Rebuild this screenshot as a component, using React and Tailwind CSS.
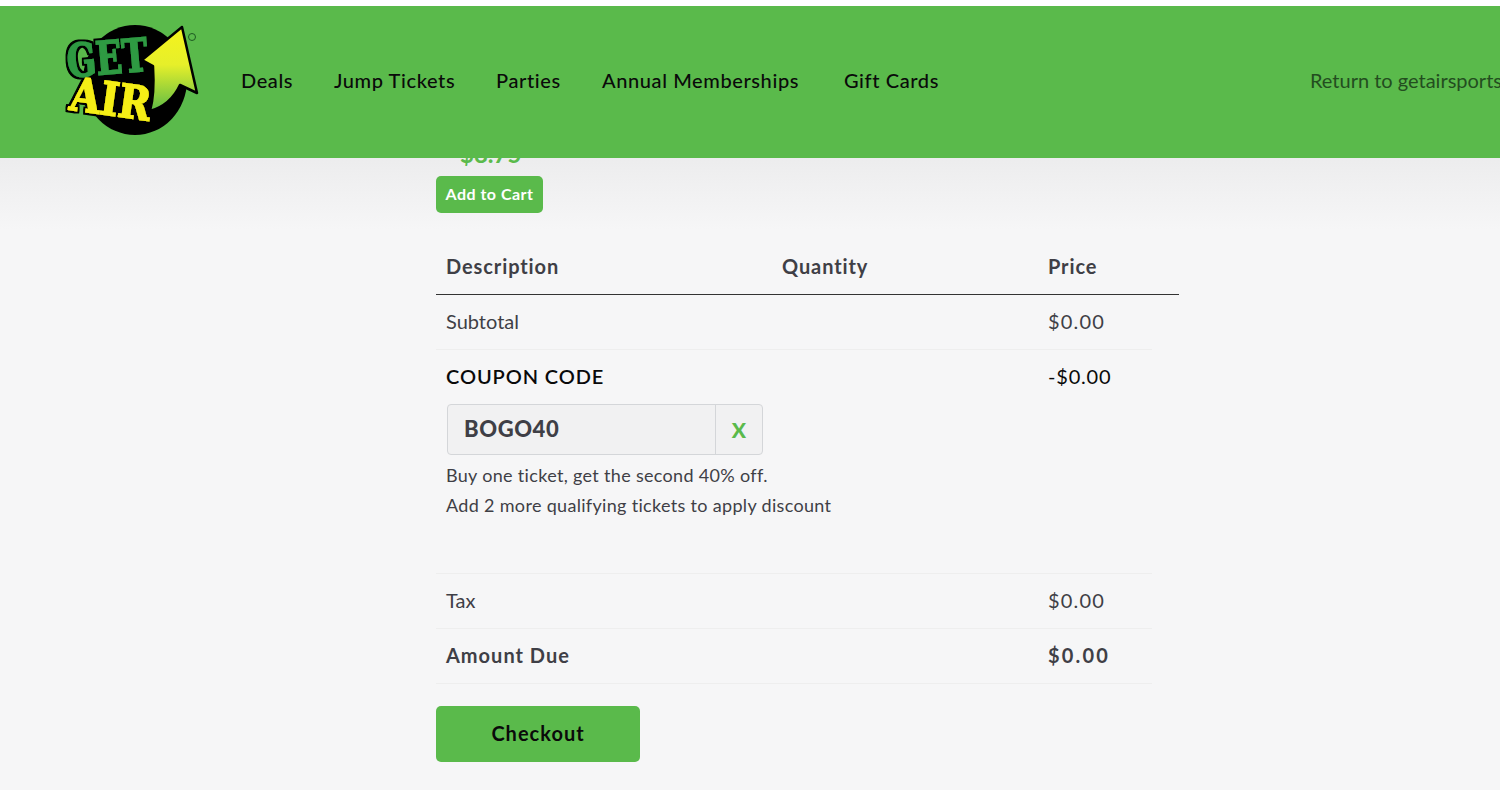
function Logo() {
  return (
    <svg width="140" height="116" viewBox="0 0 140 116" className="shrink-0 overflow-visible">
      <defs>
        <linearGradient id="arrow" x1="0" y1="0" x2="0" y2="1">
          <stop offset="0" stopColor="#f6f31c" />
          <stop offset="0.45" stopColor="#e6ef2a" />
          <stop offset="1" stopColor="#5dbb46" />
        </linearGradient>
        <filter id="outline" x="-20%" y="-20%" width="140%" height="140%">
          <feMorphology in="SourceAlpha" operator="dilate" radius="2" result="fat" />
          <feFlood floodColor="#000" />
          <feComposite in2="fat" operator="in" result="edge" />
          <feMerge>
            <feMergeNode in="edge" />
            <feMergeNode in="SourceGraphic" />
          </feMerge>
        </filter>
      </defs>
      <ellipse cx="73" cy="58" rx="52" ry="55" fill="#000" />
      <path d="M120 5 L80 38 L91 44 C92 60 92 75 88 89 C102 85 112 76 118 63 L135 71 Z" fill="url(#arrow)" stroke="#000" strokeWidth="2.5" strokeLinejoin="round" />
      <g fontFamily="'DejaVu Serif', serif" fontWeight="700" filter="url(#outline)">
        <text x="6" y="52" fontSize="46" fill="#2f9a43" stroke="#2f9a43" strokeWidth="1.4" textLength="81" lengthAdjust="spacingAndGlyphs" transform="rotate(-5 46 52)">GET</text>
        <text x="6" y="93" fontSize="46" fill="#f5ee14" stroke="#f5ee14" strokeWidth="1.4" textLength="81" lengthAdjust="spacingAndGlyphs" transform="rotate(8 46 93)">AIR</text>
      </g>
      <circle cx="130" cy="15" r="3.5" fill="none" stroke="#1d5a22" strokeWidth="1" />
    </svg>
  );
}

function Row({ label, value, bold }) {
  return (
    <div className={`flex h-[55px] w-[716px] items-center border-b border-[#eeeeee] pb-[2px] pl-[10px] text-[20px] text-[#3f3f46] ${bold ? "font-bold" : ""}`}>
      <span className={`flex-1 ${bold ? "tracking-[1px]" : ""}`}>{label}</span>
      <span className={`w-[104px] ${bold ? "tracking-[2.2px]" : "tracking-[1.2px]"}`}>{value}</span>
    </div>
  );
}

export default function App() {
  return (
    <div className="relative h-[790px] w-full overflow-hidden bg-[#f6f6f7] text-[#3f3f46] [font-family:'Lato','Noto_Sans',sans-serif]">
      <div className="h-[6px] bg-white" />
      <header className="relative z-10 flex h-[152px] items-center bg-[#5aba4b] pb-[4px] pl-[62px] whitespace-nowrap">
        <Logo />
        <nav className="ml-[39px] flex text-[20px] font-medium tracking-[0.6px] text-[#0a0a0a]">
          <a className="w-[93px]">Deals</a>
          <a className="w-[162px]">Jump Tickets</a>
          <a className="w-[106px]">Parties</a>
          <a className="w-[242px]">Annual Memberships</a>
          <a>Gift Cards</a>
        </nav>
        <a className="ml-[371px] text-[20px] text-[#234d1f]">Return to getairsports.com</a>
      </header>

      <main className="bg-gradient-to-b from-[#ebebec] to-[#f6f6f7] bg-[length:100%_84px] bg-no-repeat pl-[436px]">
        <div className="-mt-[12px] h-[30px] pl-[24px] text-[24px] font-bold leading-[16px] text-[#5aba4b]">$8.75</div>
        <button className="flex h-[37px] w-[107px] items-center justify-center rounded-[5px] bg-[#5aba4b] pb-[2px] text-[16px] font-bold tracking-[0.5px] text-white">Add to Cart</button>

        <div className="mt-[26px] flex h-[56px] w-[743px] items-center border-b border-[#333333] pb-[2px] pl-[10px] text-[20px] font-bold tracking-[0.9px]">
          <span className="w-[336px]">Description</span>
          <span className="w-[266px]">Quantity</span>
          <span>Price</span>
        </div>

        <Row label="Subtotal" value="$0.00" />

        <div className="flex h-[224px] w-[716px] border-b border-[#eeeeee] pl-[10px] pt-[14px]">
          <div className="flex-1">
            <div className="text-[20px] font-semibold leading-[24px] tracking-[0.9px] text-[#0a0a0a]">COUPON CODE</div>
            <div className="ml-[1px] mt-[16px] flex h-[51px] w-[316px] rounded-[4px] border border-[#d4d6d9] bg-[#f1f1f2]">
              <span className="flex w-[268px] items-center border-r border-[#d4d6d9] pb-[2px] pl-[16px] text-[22px] font-black tracking-[0.6px]">BOGO40</span>
              <span className="flex flex-1 items-center justify-center text-[21px] font-black text-[#5aba4b]">X</span>
            </div>
            <div className="mt-[5px] text-[18px] leading-[30px] tracking-[0.32px]">Buy one ticket, get the second 40% off.</div>
            <div className="text-[18px] leading-[30px] tracking-[0.32px]">Add 2 more qualifying tickets to apply discount</div>
          </div>
          <span className="-ml-[3px] w-[104px] text-[20px] leading-[24px] tracking-[0.8px] text-[#0a0a0a]">-$0.00</span>
        </div>

        <Row label="Tax" value="$0.00" />
        <Row label="Amount Due" value="$0.00" bold />

        <button className="mt-[22px] flex h-[56px] w-[204px] items-center justify-center rounded-[5px] bg-[#5aba4b] pb-[2px] text-[20px] font-bold tracking-[1px] text-[#0a0a0a]">Checkout</button>
      </main>
    </div>
  );
}
